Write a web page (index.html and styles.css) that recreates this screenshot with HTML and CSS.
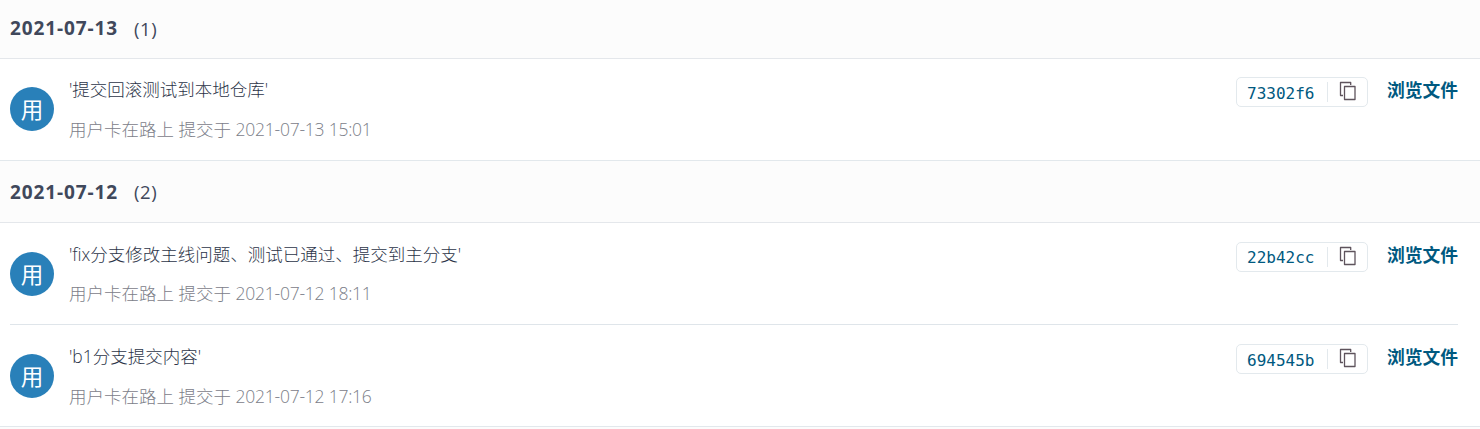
FILE: index.html
```html
<!DOCTYPE html>
<html lang="zh-CN">
<head>
<meta charset="utf-8">
<title>提交</title>
<link rel="stylesheet" href="styles.css">
</head>
<body>
<svg width="0" height="0" class="defs"><symbol id="copy" viewBox="0 0 18 20"><path d="M4 14.5H1.5V1.5H11.7V4M5.5 5.5H16V18.5H5.5Z" fill="none" stroke="#5e535c" stroke-width="1.3" stroke-linejoin="round"/></symbol></svg>
<main class="commits">
  <h2 class="day first"><b>2021-07-13</b><span>(1)</span></h2>
  <article class="commit top">
    <div class="avatar">用</div>
    <div class="info"><p class="title">'提交回滚测试到本地仓库'</p><p class="meta">用户卡在路上 提交于 <span class="time">2021-07-13 15:01</span></p></div>
    <div class="hash"><code>73302f6</code><i></i><svg><use href="#copy"/></svg></div>
    <a class="browse">浏览文件</a>
  </article>
  <h2 class="day"><b>2021-07-12</b><span>(2)</span></h2>
  <article class="commit inner">
    <div class="avatar">用</div>
    <div class="info"><p class="title">'fix分支修改主线问题、测试已通过、提交到主分支'</p><p class="meta">用户卡在路上 提交于 <span class="time">2021-07-12 18:11</span></p></div>
    <div class="hash"><code>22b42cc</code><i></i><svg><use href="#copy"/></svg></div>
    <a class="browse">浏览文件</a>
  </article>
  <article class="commit last">
    <div class="avatar">用</div>
    <div class="info"><p class="title">'b1分支提交内容'</p><p class="meta">用户卡在路上 提交于 <span class="time">2021-07-12 17:16</span></p></div>
    <div class="hash"><code>694545b</code><i></i><svg><use href="#copy"/></svg></div>
    <a class="browse">浏览文件</a>
  </article>
</main>
</body>
</html>
```
FILE: styles.css
```css
* { box-sizing: border-box; }
body { margin: 0; background: #fcfcfc; color: #2c3448; font-family: "Open Sans", "Noto Sans CJK SC", sans-serif; font-size: 17.5px; overflow: hidden; }
p, h2 { margin: 0; }
.defs { display: block; }
.day { display: flex; align-items: center; height: 62px; padding: 0 10px; border-bottom: 1px solid #e4e7eb; background: #fcfcfc; color: #40485b; font-size: 18.5px; font-weight: 400; }
.day.first { height: 59px; padding-bottom: 2px; }
.day b { width: 124px; font-size: 19px; letter-spacing: 0.9px; }
.day span { letter-spacing: 0.6px; }
.commit { display: flex; align-items: flex-start; height: 102px; padding: 0 22px 0 10px; border-bottom: 1px solid #e2e8ec; background: #fff; font-weight: 300; }
.commit.inner { border: 0; background: linear-gradient(#dfe5ea, #dfe5ea) 10px 101px / 1448px 1px no-repeat #fff; }
.avatar { width: 44px; height: 44px; margin-top: 29px; border-radius: 50%; background: #2980b9; color: #fff; font: 400 22.5px/42px "Noto Sans CJK SC", sans-serif; text-align: center; }
.info { flex: 1; padding: 16px 0 0 15px; }
.title, .meta { line-height: 30px; white-space: nowrap; }
.meta { margin-top: 10px; color: #7c8089; }
.inner .meta { margin-top: 9px; }
.time { letter-spacing: -0.24px; }
.hash { display: flex; align-items: center; width: 132px; height: 30px; margin-top: 19px; padding-left: 10px; border: 1px solid #e3e9ed; border-radius: 5px; }
.hash code { width: 80px; padding-top: 2px; color: #005980; font: 400 16px/24px "DejaVu Sans Mono", monospace; }
.hash i { width: 1px; height: 20px; background: #e3e9ed; }
.hash svg { width: 18px; height: 20px; margin: 0 0 2px 11px; }
.browse { width: 71px; margin-left: 19px; padding-top: 17px; line-height: 30px; color: #005980; font-weight: 700; font-size: 17.75px; white-space: nowrap; }
.top .avatar { margin-top: 28px; }
.top .hash { margin-top: 18px; }
.top .info { padding-top: 15px; }
.top .browse { padding-top: 16px; }
.top code, .last code { padding-top: 4px; }
```
